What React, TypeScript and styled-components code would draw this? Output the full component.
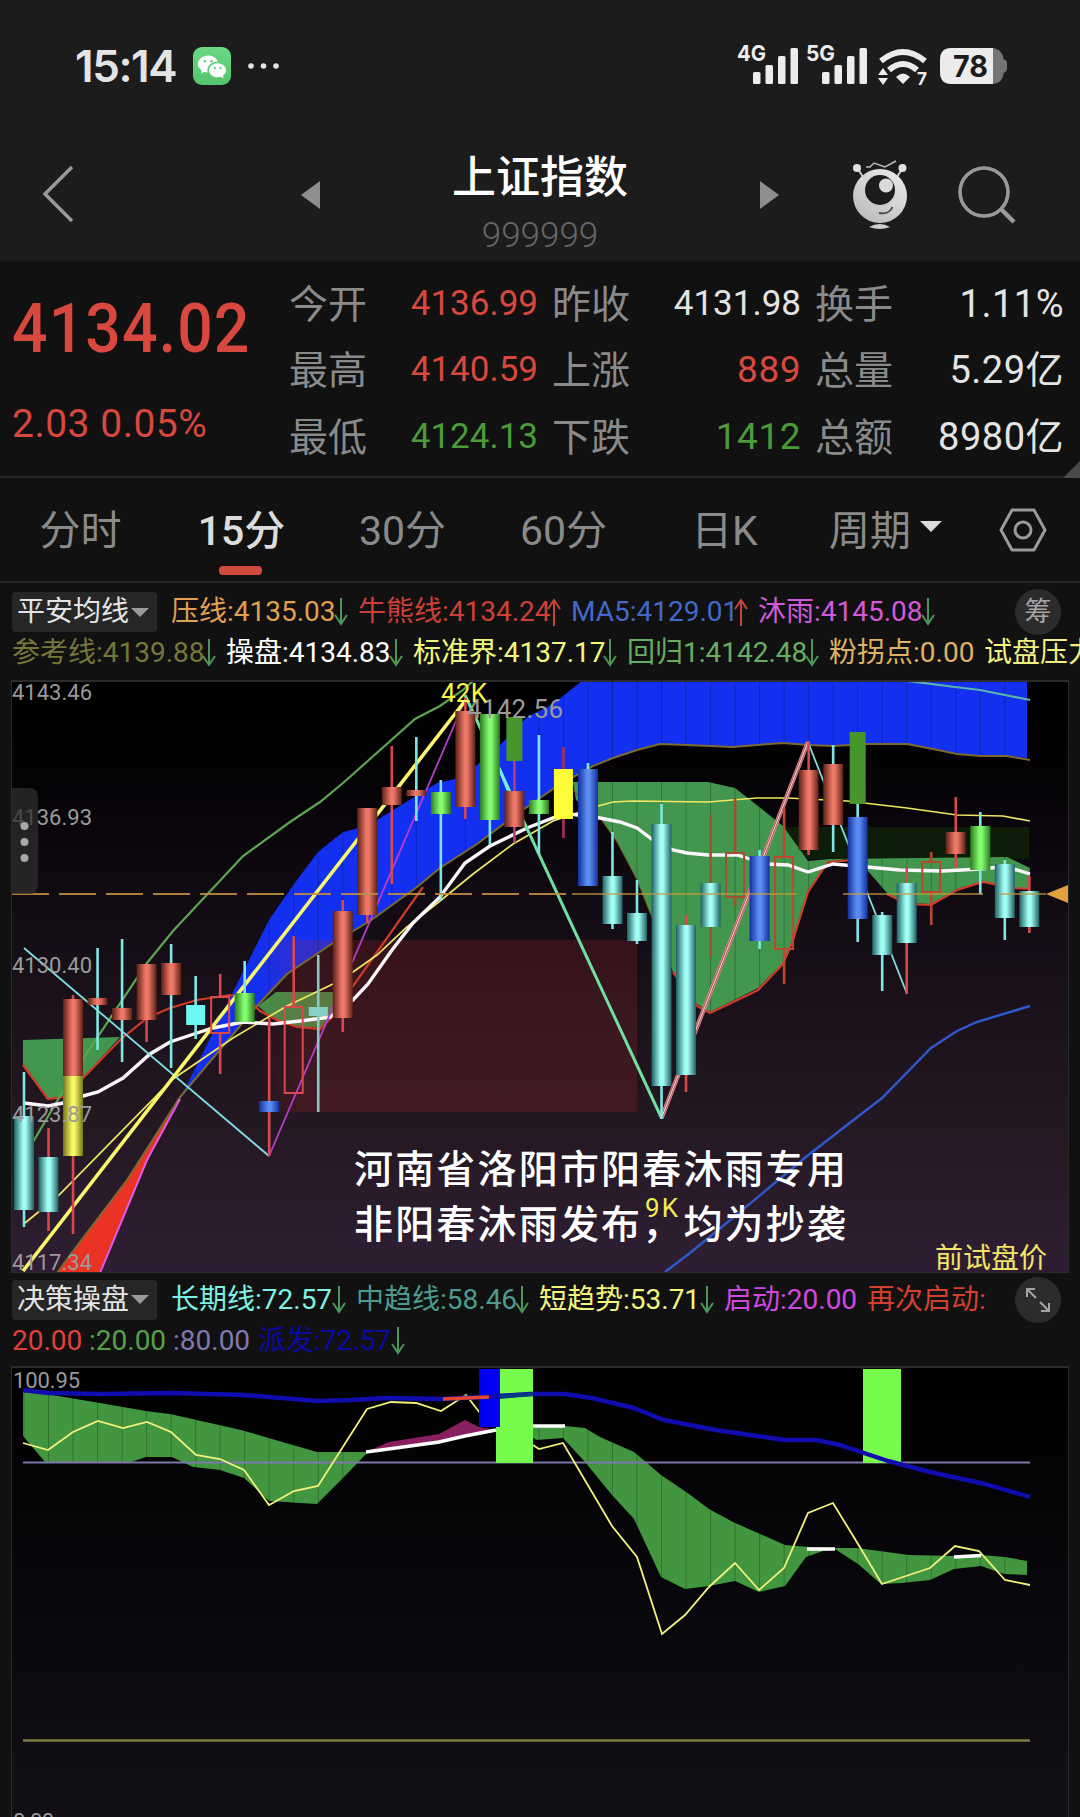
import styled, { createGlobalStyle } from "styled-components";
import { BsWechat } from "react-icons/bs";

const GlobalStyle = createGlobalStyle`
  * {
    box-sizing: border-box;
  }
  body {
    margin: 0;
    background: #111;
    font-family: Roboto, "Noto Sans CJK SC", sans-serif;
  }
  svg {
    display: block;
    overflow: visible;
  }
`;

const red = "#d8483e";
const green = "#4c9a3a";
const light = "#e4e4e4";

const Page = styled.main`
  width: 1080px;
  height: 1817px;
  overflow: hidden;
  background: #111;
  color: ${light};
`;

const Header = styled.header`
  height: 262px;
  background: #1c1c1c;
  border-bottom: 2px solid #161616;
`;

const StatusBar = styled.div`
  height: 132px;
  padding: 0 72px 0 75px;
  display: flex;
  align-items: center;
  justify-content: space-between;
`;

const StatusGroup = styled.div`
  display: flex;
  align-items: center;
  gap: 15px;
`;

const Clock = styled.span`
  width: 103px;
  font-family: Inter, sans-serif;
  font-size: 44px;
  font-weight: 600;
  letter-spacing: -1.4px;
  line-height: 44px;
  white-space: nowrap;
`;

const WechatBadge = styled.span`
  width: 38px;
  height: 38px;
  border-radius: 9px;
  display: flex;
  align-items: center;
  justify-content: center;
  color: #fff;
  background: linear-gradient(#6ad886, #55c46c);
`;

const NavBar = styled.nav`
  height: 126px;
  display: grid;
  grid-template-columns: 300px 480px 150px 150px;
  align-items: center;
`;

const TitleRow = styled.div`
  display: flex;
  align-items: center;
  justify-content: space-between;
`;

const RobotCell = styled.div`
  padding-left: 70px;
`;

const Title = styled.div`
  padding-top: 18px;
  display: flex;
  flex-direction: column;
  align-items: center;
`;

const Name = styled.h1`
  margin: 0;
  font-size: 44px;
  font-weight: 500;
  line-height: 54px;
  color: #fff;
`;

const Code = styled.span`
  font-size: 35px;
  font-weight: 350;
  line-height: 44px;
  color: #666;
  margin-top: 9px;
`;

const Quote = styled.section`
  position: relative;
  height: 216px;
  display: flex;
  border-bottom: 2px solid #262626;
`;

const Last = styled.div`
  width: 289px;
  padding: 27px 0 0 12px;
  color: ${red};
`;

// condensed digits, the family has no narrow width
const Price = styled.div`
  font-size: 68px;
  font-weight: 500;
  line-height: 80px;
  letter-spacing: 1.2px;
  transform: scaleX(0.92);
  transform-origin: left;
`;

const Change = styled.div`
  margin-top: 32px;
  font-size: 39px;
  line-height: 46px;
  letter-spacing: 0.5px;
`;

const Stats = styled.div`
  display: grid;
  grid-template-columns: repeat(3, 249px);
  grid-auto-rows: 66.5px;
  column-gap: 14px;
  padding-top: 8px;
`;

const Stat = styled.div`
  display: flex;
  align-items: center;
  justify-content: space-between;
`;

const StatLabel = styled.span`
  padding-top: 3px;
  font-size: 39px;
  line-height: 50px;
  color: #8a8a8a;
`;

const StatValue = styled.span<{ $color: string; $size: number }>`
  padding-top: 1px;
  font-size: ${({ $size }) => $size}px;
  line-height: 50px;
  letter-spacing: ${({ $size }) => ($size > 36 ? 0.5 : 0)}px;
  color: ${({ $color }) => $color};
`;

const Corner = styled.i`
  position: absolute;
  right: 0;
  bottom: -2px;
  border-left: 17px solid transparent;
  border-bottom: 17px solid #4a4a4a;
`;

const Tabs = styled.div`
  height: 105px;
  display: flex;
  border-bottom: 2px solid #232323;
`;

const Tab = styled.div<{ $active?: boolean }>`
  position: relative;
  width: 161px;
  padding-bottom: 6px;
  display: flex;
  align-items: center;
  justify-content: center;
  gap: 9px;
  font-size: 41px;
  font-weight: ${({ $active }) => ($active ? 500 : 400)};
  color: ${({ $active }) => ($active ? "#dcdcdc" : "#8a8a8a")};
  &::after {
    content: "";
    display: ${({ $active }) => ($active ? "block" : "none")};
    position: absolute;
    left: 58px;
    bottom: 6px;
    width: 43px;
    height: 9px;
    border-radius: 4px;
    background: #d14a40;
  }
`;

const Settings = styled.div`
  flex: 1;
  display: flex;
  align-items: center;
  justify-content: center;
`;

const Caret = styled.i<{ $size: number; $color: string }>`
  border: ${({ $size }) => $size}px solid transparent;
  border-top-color: ${({ $color }) => $color};
  border-bottom: 0;
`;

const Indicators = styled.div<{ $height: number }>`
  height: ${({ $height }) => $height}px;
  padding-left: 12px;
  overflow: hidden;
`;

const IndicatorRow = styled.div<{ $height: number }>`
  width: 1100px;
  height: ${({ $height }) => $height}px;
  display: flex;
  align-items: center;
  gap: 10px;
`;

const Picker = styled.div`
  width: 145px;
  height: 40px;
  padding-left: 5px;
  margin-right: 4px;
  display: flex;
  align-items: center;
  gap: 2px;
  border-radius: 4px;
  background: #262626;
  font-size: 28px;
  line-height: 40px;
`;

const Reading = styled.div<{ $color: string }>`
  display: flex;
  align-items: center;
  color: ${({ $color }) => $color};
  font-size: 28px;
  line-height: 36px;
  white-space: nowrap;
`;

const ReadingText = styled.span<{ $width: number }>`
  width: ${({ $width }) => $width}px;
`;

const RoundButton = styled.div`
  width: 46px;
  height: 46px;
  margin: 0 51px 0 auto;
  border-radius: 50%;
  display: flex;
  align-items: center;
  justify-content: center;
  background: #2c2c2c;
  color: #a4a4a4;
  font-size: 27px;
  line-height: 46px;
`;

const ChartFrame = styled.div<{ $height: number }>`
  height: ${({ $height }) => $height}px;
  margin: 0 11px;
  border: 1px solid #2b2b2b;
  border-top-width: 2px;
  overflow: hidden;
`;

const stats = [
  { label: "今开", value: "4136.99", color: red, size: 35 },
  { label: "昨收", value: "4131.98", color: light, size: 35 },
  { label: "换手", value: "1.11%", color: light, size: 38 },
  { label: "最高", value: "4140.59", color: red, size: 35 },
  { label: "上涨", value: "889", color: red, size: 37 },
  { label: "总量", value: "5.29亿", color: light, size: 38 },
  { label: "最低", value: "4124.13", color: green, size: 35 },
  { label: "下跌", value: "1412", color: green, size: 37 },
  { label: "总额", value: "8980亿", color: light, size: 38 },
];

const tabs = ["分时", "15分", "30分", "60分", "日K"];

interface IReading {
  text: string;
  color: string;
  width: number;
  arrow?: "up" | "down";
}

const mainTop: IReading[] = [
  { text: "压线:4135.03", color: "#e0a050", width: 163, arrow: "down" },
  { text: "牛熊线:4134.24", color: "#cc4038", width: 189, arrow: "up" },
  { text: "MA5:4129.01", color: "#4468c8", width: 163, arrow: "up" },
  { text: "沐雨:4145.08", color: "#d25ad8", width: 163, arrow: "down" },
];

const mainBottom: IReading[] = [
  { text: "参考线:4139.88", color: "#75763a", width: 190, arrow: "down" },
  { text: "操盘:4134.83", color: "#fff", width: 163, arrow: "down" },
  { text: "标准界:4137.17", color: "#f2f87c", width: 190, arrow: "down" },
  { text: "回归1:4142.48", color: "#68ae60", width: 178, arrow: "down" },
  { text: "粉拐点:0.00", color: "#dfb164", width: 145 },
  { text: "试盘压力", color: "#f2f080", width: 112 },
];

const subTop: IReading[] = [
  { text: "长期线:72.57", color: "#7ff0e4", width: 161, arrow: "down" },
  { text: "中趋线:58.46", color: "#4d9a90", width: 159, arrow: "down" },
  { text: "短趋势:53.71", color: "#f4f47c", width: 161, arrow: "down" },
  { text: "启动:20.00", color: "#d048e0", width: 133 },
  { text: "再次启动:", color: "#d2402f", width: 120 },
];

const subBottom: IReading[] = [
  { text: "20.00", color: "#e0403a", width: 67 },
  { text: ":20.00", color: "#58a048", width: 74 },
  { text: ":80.00", color: "#8078b0", width: 75 },
  { text: "派发:72.57", color: "#0a0aa4", width: 133, arrow: "down" },
];

type Tone = "red" | "teal" | "green" | "blue" | "yellow" | "cyan" | "pale" | "hollow" | "gold" | "leaf";

const gradients: Record<string, [string, string]> = {
  red: ["#5c2014", "#ee7868"],
  teal: ["#1f5f62", "#a2fff4"],
  green: ["#2b7a1e", "#84fb70"],
  blue: ["#122f9c", "#5c8cf0"],
  yellow: ["#73731c", "#f8f866"],
};

const flats: Record<string, string> = {
  cyan: "#6ef6f2",
  pale: "#86d0c8",
  gold: "#fffd38",
  leaf: "#47962c",
};

const RED = "#d8484c";
const CYAN = "#7ee6e4";

// slot, tone, body top, body bottom, wick top, wick bottom, wick colour
const candles: [number, Tone, number, number, number, number, string][] = [
  [0, "teal", 1116, 1210, 1072, 1227, CYAN],
  [1, "teal", 1157, 1212, 1128, 1231, RED],
  [2, "red", 999, 1077, 995, 1234, RED],
  [2, "yellow", 1076, 1156, 1076, 1156, RED],
  [3, "red", 998, 1005, 948, 1050, CYAN],
  [4, "red", 1008, 1020, 939, 1062, CYAN],
  [5, "red", 964, 1020, 964, 1042, RED],
  [6, "red", 963, 995, 944, 1068, CYAN],
  [7, "cyan", 1005, 1025, 976, 1039, CYAN],
  [8, "hollow", 997, 1033, 974, 1074, RED],
  [9, "green", 993, 1022, 961, 1022, CYAN],
  [10, "blue", 1101, 1112, 1018, 1156, RED],
  [11, "hollow", 1007, 1093, 936, 1093, RED],
  [12, "pale", 1007, 1016, 955, 1112, "#8cc8c2"],
  [13, "red", 911, 1018, 900, 1032, RED],
  [14, "red", 808, 915, 808, 923, RED],
  [15, "red", 787, 805, 746, 884, RED],
  [16, "red", 790, 796, 737, 821, CYAN],
  [17, "green", 792, 814, 780, 901, CYAN],
  [18, "red", 711, 807, 698, 819, RED],
  [19, "green", 714, 820, 714, 845, CYAN],
  [20, "red", 791, 827, 717, 843, "#b83c78"],
  [20, "leaf", 717, 761, 717, 761, RED],
  [21, "green", 800, 814, 735, 854, CYAN],
  [22, "gold", 769, 819, 747, 838, "#a83058"],
  [23, "blue", 769, 886, 763, 886, CYAN],
  [24, "teal", 876, 924, 832, 929, CYAN],
  [25, "teal", 913, 941, 880, 944, CYAN],
  [26, "teal", 824, 1086, 804, 1119, CYAN],
  [27, "teal", 925, 1075, 915, 1092, RED],
  [28, "teal", 883, 927, 815, 957, "#a4502e"],
  [29, "hollow", 853, 897, 798, 906, "#a4502e"],
  [30, "blue", 856, 941, 850, 949, CYAN],
  [31, "hollow", 857, 949, 808, 984, "#c2452e"],
  [32, "red", 770, 850, 741, 855, RED],
  [33, "red", 764, 825, 745, 852, CYAN],
  [34, "blue", 817, 919, 803, 942, CYAN],
  [34, "leaf", 732, 804, 732, 804, CYAN],
  [35, "teal", 915, 955, 912, 991, CYAN],
  [36, "teal", 883, 943, 867, 994, RED],
  [37, "hollow", 862, 892, 852, 925, "#b5482e"],
  [38, "red", 832, 854, 797, 868, RED],
  [39, "green", 826, 870, 812, 894, CYAN],
  [40, "teal", 864, 918, 860, 940, CYAN],
  [41, "teal", 891, 927, 876, 933, RED],
];

const slotX = (slot: number) => 24 + slot * 24.52;
const slots = Array.from({ length: 42 }, (_, i) => i);

const band =
  "180,1099 236,986 269,920 294,884 318,852 343,832 355,829 377,820 403,804 437,783 455,779 477,765 500,745 527,717 553,704 583,680 1027,680 1027,758 1007,756 980,756 957,754 933,749 907,744 867,744 833,746 808,745 783,743 757,745 733,747 687,745 660,744 637,750 613,758 593,766 573,777 553,789 517,814 477,844 440,868 417,887 370,921 333,943 287,974 257,1006";
const bandFloor =
  "57,1273 70,1255 127,1180 180,1097 257,1006 287,974 333,943 370,921 417,887 440,868 477,844 517,814 553,789 573,777 593,766 613,758 637,750 660,744 687,745 733,747 757,745 783,743 808,745 833,746 867,744 907,744 933,749 957,754 980,756 1007,756 1030,760";
const cloud =
  "573,782 708,782 735,788 758,806 783,826 808,861 830,859 1007,857 1030,868 1030,889 1013,888 983,882 957,889 931,904 907,903 887,893 867,870 846,859 828,862 808,891 792,943 783,963 758,988 710,1012 697,1004 673,972 650,913 637,880 617,842 600,818 576,800";
const cloudLeft = "23,1040 120,1037 83,1078 63,1097 48,1099 23,1065";
const cloudMid = "258,1006 276,992 333,992 333,1014 320,1028 293,1026 273,1019";
const average =
  "24,1103 48,1106 63,1103 83,1096 98,1092 123,1078 150,1054 170,1042 197,1033 213,1028 243,1022 273,1024 300,1021 330,1017 353,1000 368,984 392,950 413,923 440,897 465,863 490,846 527,828 553,818 570,814 600,818 620,822 637,828 653,840 673,850 687,853 708,855 737,855 750,859 767,864 788,865 808,872 833,864 867,867 900,870 943,871 980,869 1000,867 1017,870 1030,874";
const standard =
  "25,1223 58,1196 173,1079 233,1038 260,1022 287,1006 333,984 353,972 377,955 407,927 440,901 473,874 513,844 553,821 598,806 613,802 633,801 708,802 757,798 787,798 847,801 907,808 957,815 1003,816 1030,821";

const subCloud =
  "23,1392 52,1395 100,1403 146,1411 170,1414 241,1430 317,1452 368,1452 344,1477 317,1504 269,1501 244,1478 220,1470 193,1467 172,1457 146,1457 131,1462 45,1462 23,1436";
const subCloudRight =
  "533,1427 565,1426 585,1428 600,1437 634,1452 661,1475 689,1494 709,1509 733,1522 785,1545 809,1547 835,1548 857,1548 909,1555 954,1556 981,1555 1005,1557 1027,1561 1027,1575 1004,1574 981,1566 954,1569 930,1580 902,1583 881,1584 858,1564 835,1549 823,1551 806,1557 785,1586 759,1592 735,1581 709,1586 685,1589 661,1577 634,1519 612,1495 585,1462 563,1438 537,1440 533,1438";
const longLine =
  "23,1390 48,1393 100,1394 172,1393 244,1395 317,1401 351,1400 386,1398 441,1399 482,1397 530,1394 565,1394 592,1398 634,1408 664,1420 716,1430 785,1440 816,1440 840,1445 888,1461 930,1472 985,1484 1030,1497";
const shortLeft =
  "23,1443 48,1450 73,1432 98,1421 123,1428 147,1422 171,1432 196,1455 220,1459 244,1470 269,1505 294,1491 318,1486 367,1409 391,1402 416,1403 441,1411 466,1395 480,1413";
const shortRight =
  "533,1445 539,1449 563,1443 612,1526 637,1557 662,1634 685,1615 709,1587 735,1563 759,1590 784,1568 808,1513 833,1503 858,1544 882,1584 930,1568 955,1546 979,1551 1005,1580 1030,1585";

function Candle({ row }: { row: (typeof candles)[number] }) {
  const [slot, tone, top, bottom, wickTop, wickBottom, wick] = row;
  const x = slotX(slot);
  const half = tone === "leaf" ? 8 : tone in flats ? 9.5 : 10;
  return (
    <g>
      <path
        d={`M${x} ${wickTop}V${top}M${x} ${bottom}V${wickBottom}`}
        stroke={wick}
        strokeWidth={2.6}
      />
      {tone === "hollow" ? (
        <rect x={x - 9} y={top} width={18} height={bottom - top} fill="none" stroke={wick} strokeWidth={2} />
      ) : (
        <rect
          x={x - half}
          y={top}
          width={half * 2}
          height={bottom - top}
          fill={flats[tone] || `url(#${tone})`}
        />
      )}
    </g>
  );
}

function SlotLines({ clip, top, bottom }: { clip: string; top: number; bottom: number }) {
  return (
    <g clipPath={`url(#${clip})`} stroke="#000" strokeOpacity={0.24}>
      {slots.map((slot) => (
        <path key={slot} d={`M${slotX(slot)} ${top}V${bottom}`} />
      ))}
    </g>
  );
}

function MainChart() {
  return (
    <svg width="1056" height="590" viewBox="12 682 1056 590" fill="none" fontFamily='Roboto, "Noto Sans CJK SC", sans-serif'>
      <defs>
        <linearGradient id="mainBg" x2="0" y2="1">
          <stop offset="0" stopColor="#000" />
          <stop offset="0.15" stopColor="#040205" />
          <stop offset="0.4" stopColor="#130c15" />
          <stop offset="0.75" stopColor="#241822" />
          <stop offset="1" stopColor="#2f1e33" />
        </linearGradient>
        {Object.entries(gradients).map(([id, [edge, core]]) => (
          <linearGradient key={id} id={id}>
            <stop offset="0" stopColor={edge} />
            <stop offset="0.45" stopColor={core} />
            <stop offset="0.58" stopColor={core} />
            <stop offset="1" stopColor={edge} />
          </linearGradient>
        ))}
        <linearGradient id="box">
          <stop offset="0" stopColor="#c82028" stopOpacity="0" />
          <stop offset="0.12" stopColor="#b8282a" stopOpacity="0.2" />
        </linearGradient>
        <clipPath id="bandClip">
          <polygon points={band} />
        </clipPath>
        <clipPath id="cloudClip">
          <polygon points={cloud} />
        </clipPath>
      </defs>
      <rect x="12" y="682" width="1056" height="590" fill="url(#mainBg)" />
      <polygon points={band} fill="#1330f0" />
      <rect x="783" y="827" width="246" height="32" fill="#0d1d09" />
      <polygon points={cloudLeft} fill="#42964e" />
      <polygon points={cloudMid} fill="#42904a" />
      <polygon points={cloud} fill="#42964e" />
      <SlotLines clip="bandClip" top={680} bottom={1100} />
      <SlotLines clip="cloudClip" top={780} bottom={1015} />
      <rect x="258" y="940" width="379" height="172" fill="url(#box)" />
      <polygon points="57,1273 127,1180 180,1099 147,1160 100,1273" fill="#ea3323" />
      <polyline points={bandFloor} stroke="#7a6a30" strokeWidth="2" />
      <path d="M100 1273L147 1160L180 1099" stroke="#e058e8" strokeWidth="2" />
      <polyline
        points="23,1065 48,1099 63,1097 83,1078 120,1040 147,1018 170,1008 197,1000 230,995 247,998 260,1011 277,1020 297,1027 320,1029 333,1016 353,986 423,887"
        stroke="#d03a28"
        strokeWidth="2.2"
      />
      <polyline points="573,790 600,818 617,842 637,880 650,913" stroke="#7a4424" />
      <polyline
        points="673,972 697,1006 710,1013 758,990 783,964 792,943 808,892 828,862 867,859"
        stroke="#cf3d2c"
        strokeWidth="2.2"
      />
      <polyline points="887,894 907,904 931,905 957,890 983,882 1013,888 1030,889" stroke="#cf3d2c" strokeWidth="2.2" />
      <polyline
        points="33,1142 63,1091 87,1053 147,963 173,931 243,856 290,822 320,802 343,783 370,759 415,719 440,706 463,690 474,680"
        stroke="#5ca650"
        strokeWidth="2.2"
      />
      <polyline points="900,680 955,687 980,690 1030,700" stroke="#58b4a8" strokeWidth="2.2" />
      <polyline points="665,1272 690,1253 740,1212 807,1156 882,1098 931,1048 957,1031 977,1022 1030,1006" stroke="#2f58cc" strokeWidth="2.4" />
      <polyline points={standard} stroke="#f0e860" strokeWidth="1.7" />
      <polyline points={average} stroke="#fbf6fa" strokeWidth="3.4" />
      <path d="M24 948L269 1156" stroke="#82dfe6" strokeWidth="1.8" />
      <path d="M269 1156L465 700" stroke="#b83ccc" strokeWidth="1.8" />
      <path d="M23 1271L465 701" stroke="#f9f76e" strokeWidth="3.6" />
      <path d="M465 695L661.500 1118" stroke="#6fe0a0" strokeWidth="3" />
      <path d="M499 768L508 790" stroke="#7de8f2" strokeWidth="3" />
      <path d="M661.500 1118L808 742" stroke="#e07c88" strokeWidth="4.4" />
      <path d="M661.500 1118L808 742" stroke="#6c3438" strokeWidth="2" />
      <path d="M661.500 1118L808 742" stroke="#f8d0c8" strokeWidth="1.200" />
      <path d="M808 742L906.700 993" stroke="#86dcd8" strokeWidth="1.8" />
      {candles.map((row, index) => (
        <Candle key={index} row={row} />
      ))}
      <path d="M12 894H572" stroke="#c08c40" strokeWidth="2" strokeDasharray="37 10" strokeOpacity="0.9" />
      <path d="M572 894H796M843 894H983M1000 894H1046" stroke="#c89a40" strokeWidth="1.500" strokeOpacity="0.85" />
      <path d="M1046 894L1068 885V903Z" fill="#dfa040" />
      <g fill="#9a9a9a" fontSize="22">
        <text x="12" y="700" textLength="80">4143.46</text>
        <text x="12" y="825" textLength="80">4136.93</text>
        <text x="12" y="973" textLength="80">4130.40</text>
        <text x="12" y="1122" textLength="80">4123.87</text>
        <text x="12" y="1270" textLength="80">4117.34</text>
        <text x="467" y="718" fontSize="26" textLength="96">4142.56</text>
      </g>
      <text x="441" y="702" fontSize="26" fill="#f4f44a" textLength="46">42K</text>
      <path d="M11 788H30Q38 788 38 798V884Q38 894 30 894H11Z" fill="#2e2e2e" fillOpacity="0.75" />
      <g fill="#a8a8a8">
        <circle cx="24.500" cy="826" r="4" />
        <circle cx="24.500" cy="842" r="4" />
        <circle cx="24.500" cy="858" r="4" />
      </g>
      <g fill="#fff" fontSize="39" fontWeight="500">
        <text x="354" y="1183" textLength="492">河南省洛阳市阳春沐雨专用</text>
        <text x="354" y="1238" textLength="492">非阳春沐雨发布，均为抄袭</text>
      </g>
      <text x="645" y="1217" fontSize="26" fill="#f0ec50" textLength="33">9K</text>
      <text x="935" y="1268" fontSize="28" fill="#f2e468">前试盘价</text>
    </svg>
  );
}

function SubChart() {
  return (
    <svg width="1056" height="450" viewBox="12 1368 1056 450" fill="none" fontFamily="Roboto, sans-serif">
      <defs>
        <linearGradient id="subBg" x2="0" y2="1">
          <stop offset="0" stopColor="#000" />
          <stop offset="0.5" stopColor="#08070b" />
          <stop offset="1" stopColor="#121014" />
        </linearGradient>
        <clipPath id="subClip">
          <polygon points={subCloud} />
          <polygon points={subCloudRight} />
        </clipPath>
      </defs>
      <rect x="12" y="1368" width="1056" height="450" fill="url(#subBg)" />
      <polygon points={subCloud} fill="#42963f" />
      <polygon points={subCloudRight} fill="#42963f" />
      <SlotLines clip="subClip" top={1380} bottom={1600} />
      <path d="M23 1462.500H1030" stroke="#7f78ac" strokeWidth="2" />
      <path d="M23 1740.500H1030" stroke="#7d7d42" strokeWidth="2.600" />
      <polygon points="366,1452 389,1442 439,1434 465,1420 479,1427 496,1430 465,1436 439,1442" fill="#882060" />
      <polyline points={shortLeft} stroke="#f2f27c" strokeWidth="1.8" />
      <polyline points={shortRight} stroke="#f2f27c" strokeWidth="1.8" />
      <rect x="479" y="1369" width="21" height="58" fill="#0000f4" />
      <path d="M500 1369H533V1463H496V1427H500Z" fill="#76fd4c" />
      <rect x="863" y="1369" width="38" height="94" fill="#76fd4c" />
      <polyline points={longLine} stroke="#100cb0" strokeWidth="4.4" strokeLinejoin="round" />
      <path d="M500 1397L533 1394" stroke="#063c80" strokeWidth="4" />
      <path d="M443 1399L489 1397" stroke="#e24632" strokeWidth="3.600" />
      <g stroke="#fff" strokeWidth="3.400">
        <polyline points="366,1452 396,1448 439,1442 465,1436 496,1430" />
        <path d="M533 1426H565M807 1549H835M954 1557L981 1555.500" />
      </g>
      <g fill="#9a9a9a" fontSize="22">
        <text x="13" y="1388" textLength="67">100.95</text>
        <text x="13" y="1829" textLength="41">0.00</text>
      </g>
    </svg>
  );
}

function Arrow({ dir }: { dir: "up" | "down" }) {
  const up = dir === "up";
  return (
    <svg width="14" height="30" viewBox="0 0 14 30" fill="none" stroke={up ? "#c4453c" : "#4c9658"} strokeWidth="2">
      <path d={up ? "M7 29V3M1 12L7 3L13 12" : "M7 1V27M1 18L7 27L13 18"} />
    </svg>
  );
}

function Readings({ items }: { items: IReading[] }) {
  return (
    <>
      {items.map((item) => (
        <Reading key={item.text} $color={item.color}>
          <ReadingText $width={item.width}>{item.text}</ReadingText>
          {item.arrow && <Arrow dir={item.arrow} />}
        </Reading>
      ))}
    </>
  );
}

function StatusIcons() {
  return (
    <svg width="272" height="46" viewBox="736 42 272 46" fill="#ececec" fontFamily="Inter, sans-serif" fontWeight="700">
      <text x="737" y="60" fontSize="22" textLength="29" lengthAdjust="spacingAndGlyphs">4G</text>
      <text x="806" y="60" fontSize="22" textLength="29" lengthAdjust="spacingAndGlyphs">5G</text>
      {[753, 822].map((x) => (
        <g key={x}>
          <rect x={x} y="71" width="7.500" height="12" rx="1.500" />
          <rect x={x + 12.5} y="64" width="7.500" height="19" rx="1.500" />
          <rect x={x + 25} y="55" width="7.500" height="28" rx="1.500" />
          <rect x={x + 37.5} y="47" width="7.500" height="36" rx="1.500" />
        </g>
      ))}
      <path d="M881 60Q903 42 925 60" fill="none" stroke="#ececec" strokeWidth="6" />
      <path d="M889 69Q903 57 917 69" fill="none" stroke="#ececec" strokeWidth="6" />
      <path d="M896 76Q903 69 910 76L903 83Z" />
      <path d="M883 67L888 74H878ZM883 84L888 77H878Z" />
      <text x="917" y="84" fontSize="18" textLength="10" lengthAdjust="spacingAndGlyphs">7</text>
      <path d="M951 47H992C999 47 1003 52 1003.500 58Q1007 59 1007 62V67Q1007 71 1003.500 72C1003 79 999 83 992 83Z" fill="#747474" />
      <path d="M951 47H993V83H951Q940 83 940 71V59Q940 47 951 47Z" />
      <text x="953" y="76" fontSize="30" fill="#1c1c1c" textLength="35" lengthAdjust="spacingAndGlyphs">78</text>
    </svg>
  );
}

function Robot() {
  return (
    <svg width="60" height="72" viewBox="850 158 60 72" fill="none">
      <defs>
        <linearGradient id="robot" x1="1" y1="0" x2="0.3" y2="1">
          <stop offset="0" stopColor="#ededed" />
          <stop offset="1" stopColor="#bdbdbd" />
        </linearGradient>
      </defs>
      <path d="M858 168L863 176M902 168L897 176" stroke="#c8c8c8" strokeWidth="2" />
      <circle cx="857" cy="167" r="4" fill="#e2e2e2" />
      <circle cx="902.500" cy="167" r="4" fill="#e2e2e2" />
      <path d="M866 166L870 166L874 162L885 166L896 160" stroke="#bcbcbc" strokeWidth="1.500" />
      <circle cx="880" cy="195" r="27" fill="url(#robot)" />
      <circle cx="880" cy="189" r="15" fill="#1c1c1c" />
      <circle cx="886" cy="184.500" r="7" fill="#dadada" />
      <path d="M879 212Q889 214 892.500 206" stroke="#444" strokeWidth="1.800" />
      <path d="M869 226Q880 220 890 226Q880 230 869 226" fill="#cfcfcf" />
    </svg>
  );
}

export default function App() {
  return (
    <Page>
      <GlobalStyle />
      <Header>
        <StatusBar>
          <StatusGroup>
            <Clock>15:14</Clock>
            <WechatBadge>
              <BsWechat size={28} />
            </WechatBadge>
            <svg width="34" height="8" viewBox="0 0 34 8" fill="#e4e4e4">
              <circle cx="5" cy="4" r="2.800" />
              <circle cx="17.500" cy="4" r="2.800" />
              <circle cx="30" cy="4" r="2.800" />
            </svg>
          </StatusGroup>
          <StatusIcons />
        </StatusBar>
        <NavBar>
          <svg width="76" height="60" viewBox="0 0 76 60" fill="none" stroke="#9a9a9a" strokeWidth="3.500">
            <path d="M72 2L45 29L72 56" />
          </svg>
          <TitleRow>
            <svg width="20" height="28" fill="#8e8e8e">
              <path d="M20 0V28L1 14Z" />
            </svg>
            <Title>
              <Name>上证指数</Name>
              <Code>999999</Code>
            </Title>
            <svg width="20" height="28" fill="#8e8e8e">
              <path d="M0 0V28L19 14Z" />
            </svg>
          </TitleRow>
          <RobotCell>
            <Robot />
          </RobotCell>
          <svg width="90" height="62" viewBox="930 163 90 62" fill="none" stroke="#999" strokeWidth="3.600">
            <circle cx="984" cy="191" r="24" />
            <path d="M1001 208L1014 221" strokeWidth="4.500" />
          </svg>
        </NavBar>
      </Header>
      <Quote>
        <Last>
          <Price>4134.02</Price>
          <Change>2.03 0.05%</Change>
        </Last>
        <Stats>
          {stats.map((stat) => (
            <Stat key={stat.label}>
              <StatLabel>{stat.label}</StatLabel>
              <StatValue $color={stat.color} $size={stat.size}>
                {stat.value}
              </StatValue>
            </Stat>
          ))}
        </Stats>
        <Corner />
      </Quote>
      <Tabs>
        {tabs.map((tab) => (
          <Tab key={tab} $active={tab === "15分"}>
            {tab}
          </Tab>
        ))}
        <Tab>
          周期
          <Caret $size={11} $color="#dcdcdc" />
        </Tab>
        <Settings>
          <svg width="48" height="44" viewBox="0 0 48 44" fill="none" stroke="#9a9a9a" strokeWidth="3">
            <path d="M13 2H35L46 22L35 42H13L2 22Z" strokeLinejoin="round" />
            <circle cx="24" cy="22" r="8" />
          </svg>
        </Settings>
      </Tabs>
      <Indicators $height={97}>
        <IndicatorRow $height={58}>
          <Picker>
            平安均线
            <Caret $size={9} $color="#9a9a9a" />
          </Picker>
          <Readings items={mainTop} />
          <RoundButton>筹</RoundButton>
        </IndicatorRow>
        <IndicatorRow $height={24}>
          <Readings items={mainBottom} />
        </IndicatorRow>
      </Indicators>
      <ChartFrame $height={593}>
        <MainChart />
      </ChartFrame>
      <Indicators $height={93}>
        <IndicatorRow $height={53}>
          <Picker>
            决策操盘
            <Caret $size={9} $color="#9a9a9a" />
          </Picker>
          <Readings items={subTop} />
          <RoundButton>
            <svg width="26" height="26" viewBox="0 0 26 26" fill="none" stroke="#a4a4a4" strokeWidth="2">
              <path d="M10 2H2V10M2 2L11 11M16 24H24V16M24 24L15 15" />
            </svg>
          </RoundButton>
        </IndicatorRow>
        <IndicatorRow $height={30}>
          <Readings items={subBottom} />
        </IndicatorRow>
      </Indicators>
      <ChartFrame $height={460}>
        <SubChart />
      </ChartFrame>
    </Page>
  );
}
